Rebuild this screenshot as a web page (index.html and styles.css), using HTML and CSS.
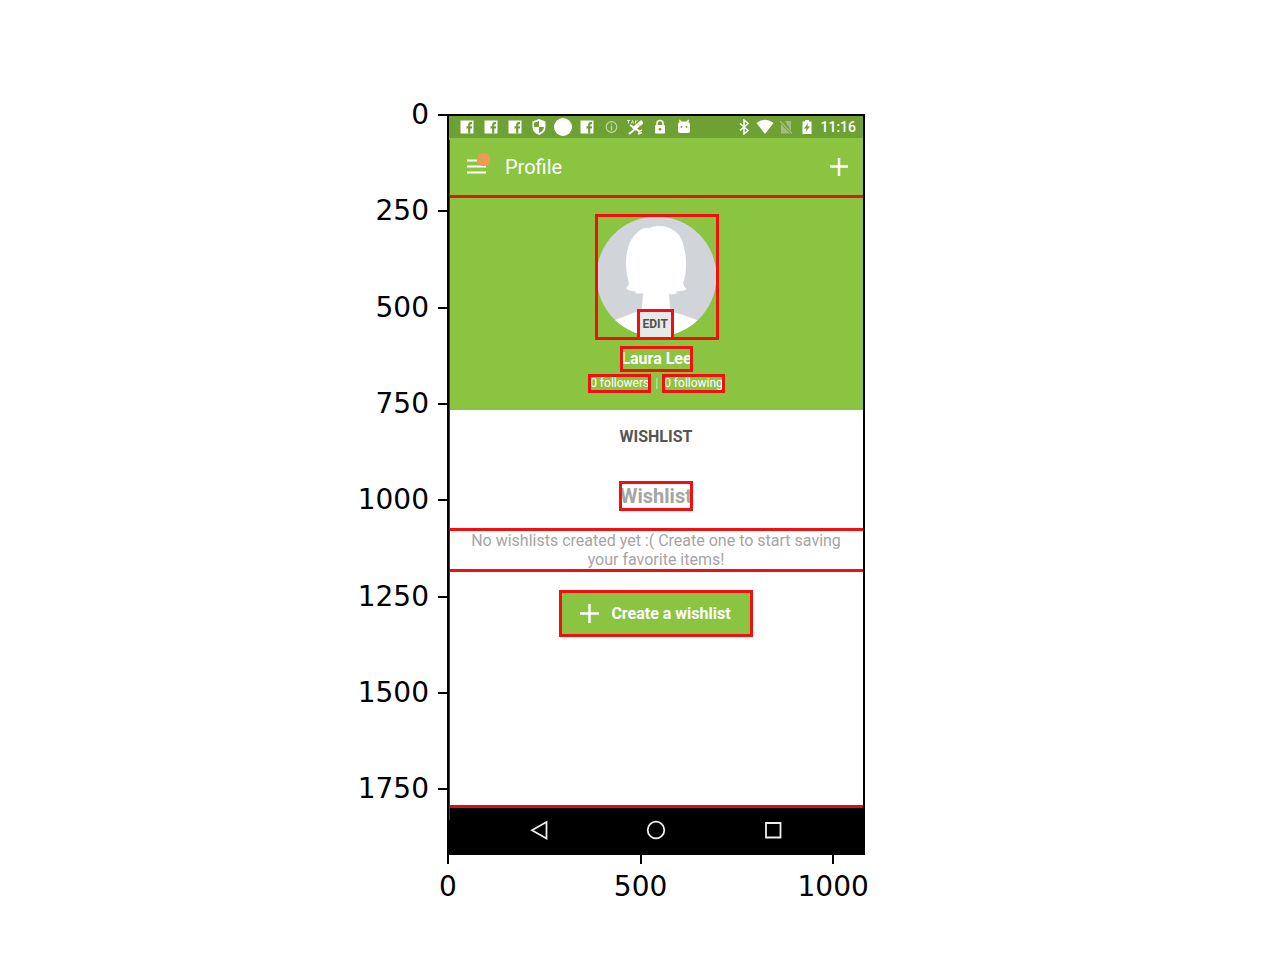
FILE: index.html
```html
<!DOCTYPE html>
<html lang="en">
<head>
<meta charset="utf-8">
<meta name="viewport" content="width=device-width, initial-scale=1">
<title>Profile</title>
<link rel="stylesheet" href="styles.css">
</head>
<body>
<svg class="defs" aria-hidden="true">
  <symbol id="fb" viewBox="0 0 16 16"><path fill="#fff" d="M1.500 1.500h13v13h-13z"/><path fill="none" stroke="#6fa034" stroke-width="2.200" d="M13 4.200h-1.200q-1.600 0-1.600 1.800v8.500M7.500 8.400H13"/></symbol>
</svg>
<div class="figure">
  <div class="y-axis">
    <div class="y-tick">0</div><div class="y-tick">250</div><div class="y-tick">500</div><div class="y-tick">750</div>
    <div class="y-tick">1000</div><div class="y-tick">1250</div><div class="y-tick">1500</div><div class="y-tick">1750</div>
  </div>
  <div class="phone">
    <div class="status">
      <div class="notifications">
        <svg class="icon"><use href="#fb"/></svg>
        <svg class="icon"><use href="#fb"/></svg>
        <svg class="icon"><use href="#fb"/></svg>
        <svg class="icon" viewBox="0 0 16 16"><path fill="#fff" d="M8 0l6.500 2.500V8q0 5.500-6.500 8Q1.500 13.500 1.500 8V2.500z"/><path fill="#6fa034" d="M8 2v6H3V3.800zM8 8h5q-.5 4-5 6z"/></svg>
        <svg class="icon icon-dot" viewBox="0 0 18 18"><circle cx="9" cy="9" r="9" fill="#fff"/></svg>
        <svg class="icon"><use href="#fb"/></svg>
        <svg class="icon" viewBox="0 0 16 16" fill="none" stroke="#c0d6a5"><circle cx="8.500" cy="8" r="5.300" stroke-width="1.200"/><path d="M8.500 4.500v1.300M8.500 6.800v4.700" stroke-width="1.400"/></svg>
        <svg class="icon" viewBox="0 0 16 16" fill="none" stroke="#fff"><path d="M0 1.500h3M1.500 1.500v3M4.500 4.500l1-3 1 3M8.500 4.500v-3M10.500 1.500L8.500 3" stroke-width=".8"/><path d="M15.500 2.500l-3.500 3" stroke-width="4"/><path d="M11.500 5.500l-5 5" stroke-width="4"/><path d="M3 6l9 6M2 15l5-4" stroke-width="2"/><path d="M11 13l4-2M11 15l4-1.500" stroke-width="1.500"/></svg>
        <svg class="icon" viewBox="0 0 16 16"><rect x="4" y="6" width="10" height="8.500" rx="1" fill="#fff"/><path d="M6 7V4.500a3 3 0 0 1 6 0V7" fill="none" stroke="#fff" stroke-width="1.500"/><circle cx="9" cy="10.300" r="1.400" fill="#6fa034"/></svg>
        <svg class="icon" viewBox="0 0 16 16"><path fill="#fff" d="M3 6q0-2 1.500-3L4 1l1-.500L6.500 2.500h5l1.500-2 1 .5-.5 2Q15 4 15 6v6q0 2-2 2H5q-2 0-2-2z"/><circle cx="6.500" cy="8" r=".9" fill="#6fa034"/><circle cx="11.500" cy="8" r=".9" fill="#6fa034"/></svg>
      </div>
      <div class="system">
        <svg class="icon" viewBox="0 0 16 16" fill="none" stroke="#fff" stroke-width="1.500"><path d="M4 4.500l8 7-4 3.500V1l4 3.500-8 7"/></svg>
        <svg class="icon icon-wifi" viewBox="0 0 18 16"><path fill="#fff" d="M.5 4Q9-2.500 17.500 4L9 15z"/></svg>
        <svg class="icon" viewBox="0 0 16 16"><path fill="#a2be7e" d="M7 2h6v10zM3 5l9 9.500H3z"/><path stroke="#a2be7e" stroke-width="1.300" d="M2 2l12 12.500"/></svg>
        <svg class="icon" viewBox="0 0 16 16"><path fill="#fff" d="M3.500 2.500h2.500V1h4v1.500h2.500V15h-9z"/><path fill="#6fa034" d="M9 4L5 9.500h2.500L6.500 13 11 7.500H8.500z"/></svg>
        <span class="clock">11:16</span>
      </div>
    </div>
    <header class="app-bar">
      <button class="icon-button" aria-label="Menu"><svg width="28" height="28" viewBox="0 0 28 28"><path d="M2 7.500h19M2 13.500h19M2 19.500h19" stroke="#fff" stroke-width="2"/><circle cx="18.500" cy="6.500" r="6.800" fill="#eb9b52"/></svg></button>
      <h1 class="title">Profile</h1>
      <button class="icon-button" aria-label="Add"><svg width="18" height="18" viewBox="0 0 18 18"><path d="M0 8.500h18M9 0v18" stroke="#fff" stroke-width="2.500"/></svg></button>
    </header>
    <main class="screen">
      <section class="hero">
        <div class="avatar marked">
          <svg class="portrait" viewBox="0 0 124 126"><defs><clipPath id="round"><circle cx="61.500" cy="62.500" r="60"/></clipPath></defs><g clip-path="url(#round)"><path fill="#d1d5da" d="M0 0h124v126H0z"/><path fill="#fff" d="M55 14Q58 12 64 12Q76 12 84 21Q91 32 91 50Q91 63 88 69Q89 74 92 75Q86 78 81 77L82 79Q78 81 74 80L75 94Q76 98 85 100L102 106L120 126H5L20 106L41 98Q47 96 47 93L48 79Q43 80 40 79L41 77Q35 78 31 74Q34 72 34 69Q31 60 31 50Q31 31 39 22Q47 12 55 14z"/></g></svg>
          <button class="edit marked">EDIT</button>
        </div>
        <h2 class="name marked">Laura Lee</h2>
        <div class="stats"><a class="stat marked" href="#followers">0 followers</a><span class="bar">|</span><a class="stat marked" href="#following">0 following</a></div>
      </section>
      <section class="wishlists">
        <h2 class="tab">WISHLIST</h2>
        <h3 class="heading marked">Wishlist</h3>
        <p class="message">No wishlists created yet :( Create one to start saving your favorite items!</p>
        <button class="create marked"><svg width="19" height="19" viewBox="0 0 19 19"><path d="M0 9.500h19M9.500 0v19" stroke="#fff" stroke-width="2.500"/></svg>Create a wishlist</button>
      </section>
    </main>
    <nav class="nav" aria-label="System">
      <button class="icon-button" aria-label="Back"><svg width="20" height="20" viewBox="0 0 20 20"><path d="M17.500 2v16.500L3 10.300z"/></svg></button>
      <button class="icon-button" aria-label="Home"><svg width="20" height="20" viewBox="0 0 20 20"><circle cx="10" cy="10" r="8.300"/></svg></button>
      <button class="icon-button" aria-label="Recent apps"><svg width="20" height="20" viewBox="0 0 20 20"><path d="M3 3h14.500v14.500H3z"/></svg></button>
    </nav>
  </div>
  <div class="x-axis"><div class="x-tick">0</div><div class="x-tick">500</div><div class="x-tick">1000</div></div>
</div>
</body>
</html>
```
FILE: styles.css
```css
* { box-sizing: border-box; }
body { margin: 0; background: #fff; color: #000; font-family: Roboto, sans-serif; }
h1, h2, h3, p { margin: 0; }
button { border: 0; padding: 0; background: none; color: inherit; font: inherit; }
a { color: inherit; text-decoration: none; }
svg { display: block; }
.defs { position: absolute; width: 0; height: 0; }

.figure {
  display: grid;
  grid-template-columns: 447fr 418fr 415fr;
  padding: 114px 0 48px;
}
.y-axis {
  display: grid;
  grid-template-rows: repeat(7, 250fr) 170fr;
  padding-top: 1px;
  font: 28px/34px "DejaVu Sans", sans-serif;
}
.y-tick { display: flex; align-items: center; justify-content: flex-end; gap: 9px; height: 0; }
.y-tick::after { content: ""; width: 9px; height: 2px; background: #000; }
.x-axis {
  grid-column: 2;
  display: grid;
  grid-template-columns: 500fr 500fr 80fr;
  padding: 0 1px;
  font: 28px/32px "DejaVu Sans", sans-serif;
}
.x-tick { display: flex; flex-direction: column; align-items: center; gap: 7px; width: 0; }
.x-tick::before { content: ""; width: 2px; height: 9px; background: #000; }

.phone { position: relative; border: 2px solid #000; }
.phone::after {
  content: "";
  position: absolute;
  top: 24px;
  bottom: 33px;
  left: 0;
  width: 1px;
  background: #a01808;
}
.marked { outline: 3px solid #f01010; outline-offset: -3px; }

.status {
  display: flex;
  justify-content: space-between;
  align-items: center;
  height: 22px;
  padding: 0 7px 1px 10px;
  background: #6fa034;
}
.notifications { display: flex; align-items: center; gap: 8px; }
.system { display: flex; align-items: center; gap: 5px; }
.icon { width: 16px; height: 16px; }
.icon-dot, .icon-wifi { width: 18px; margin: 0 -1px; }
.icon-dot { height: 18px; }
.clock { color: #fff; font-size: 14px; font-weight: 500; line-height: 22px; }

.app-bar {
  display: flex;
  align-items: center;
  height: 57px;
  padding: 0 15px 0 16px;
  background: #8ac441;
  color: #fff;
}
.title { flex: 1; margin-left: 12px; font-size: 20px; font-weight: 400; line-height: 24px; }

.screen { border-top: 3px solid #dc1c08; border-bottom: 3px solid #dc1008; }
.hero {
  display: flex;
  flex-direction: column;
  align-items: center;
  padding: 16px 0 17px 1px;
  background: #8ac441;
  color: #fff;
}
.avatar { position: relative; }
.portrait { width: 124px; height: 126px; }
.edit {
  position: absolute;
  left: 42px;
  bottom: 0;
  padding: 6px 6px;
  background: #e8e8e8;
  color: #505050;
  font-size: 12px;
  font-weight: 700;
  line-height: 19px;
}
.name { margin-top: 6px; padding: 0 1px; font-size: 16px; font-weight: 700; line-height: 26px; }
.stats { display: flex; margin-top: 2px; font-size: 12px; line-height: 19px; }
.stat { padding: 0 2px; }
.bar { padding: 0 4px; color: #d4ebb8; }

.wishlists { display: flex; flex-direction: column; align-items: center; padding-bottom: 168px; }
.tab { color: #555; font-size: 16px; font-weight: 700; line-height: 53px; }
.heading { margin-top: 18px; padding: 0 1px; color: #a5a5a5; font-size: 20px; font-weight: 700; line-height: 30px; }
.message {
  align-self: stretch;
  margin: 17px 0 18px;
  padding: 0 16px;
  border: solid #f01010;
  border-width: 3px 0;
  color: #a5a5a5;
  font-size: 16px;
  line-height: 19px;
  text-align: center;
}
.create {
  display: flex;
  align-items: center;
  gap: 12px;
  padding: 0 22px 0 21px;
  background: #8ac441;
  color: #fff;
  font-size: 16px;
  font-weight: 700;
  line-height: 47px;
}
.nav {
  display: flex;
  justify-content: center;
  gap: 97px;
  padding: 12px 0 13px;
  background: #000;
}
.nav svg { fill: none; stroke: #eee; stroke-width: 1.8px; }
```
